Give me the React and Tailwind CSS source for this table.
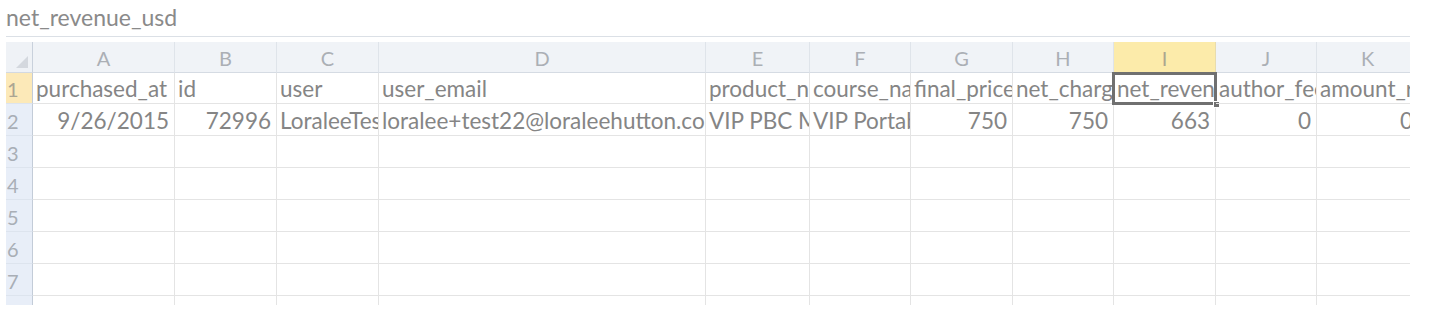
import React from "react";

const cols = ["A", "B", "C", "D", "E", "F", "G", "H", "I", "J", "K"];

const row1 = [
  "purchased_at",
  "id",
  "user",
  "user_email",
  "product_name",
  "course_name",
  "final_price",
  "net_charge",
  "net_revenue_usd",
  "author_fee",
  "amount_refunded",
];

const row2 = [
  { t: "9/26/2015", r: true },
  { t: "72996", r: true },
  { t: "LoraleeTest", r: false },
  { t: "loralee+test22@loraleehutton.com", r: false },
  { t: "VIP PBC Membership", r: false },
  { t: "VIP Portable Business", r: false },
  { t: "750", r: true },
  { t: "750", r: true },
  { t: "663", r: true },
  { t: "0", r: true },
  { t: "0", r: true },
];

const gridCols =
  "grid grid-cols-[27px_142px_102px_102px_327px_104px_101px_102px_101px_102px_101px_102px]";

function Cell({ children, right, className = "" }) {
  return (
    <div
      className={`border-r border-b border-[#e4e4e4] overflow-hidden whitespace-nowrap leading-none flex items-end pb-[3px] ${
        right ? "justify-end pr-[5px]" : "justify-start pl-[3px]"
      } ${className}`}
    >
      <span className="block">{children}</span>
    </div>
  );
}

function RowHeader({ n, h, active }) {
  return (
    <div
      className={`${h} border-r border-r-[#c3ccd8] border-b border-b-[#dde4ee] flex items-end pb-[4px] pl-[1px] text-[20px] leading-none ${
        active ? "bg-[#fce9b8] text-[#aba593]" : "bg-[#e8eef8] text-[#a9aeb6]"
      }`}
    >
      {n}
    </div>
  );
}

export default function App() {
  const emptyRows = [
    { n: 3, h: "h-[32px]" },
    { n: 4, h: "h-[32px]" },
    { n: 5, h: "h-[32px]" },
    { n: 6, h: "h-[32px]" },
    { n: 7, h: "h-[32px]" },
    { n: "", h: "h-[32px]" },
  ];
  return (
    <div
      className="w-[1431px] h-[323px] bg-white overflow-hidden"
      style={{ fontFamily: "Lato, 'Open Sans', sans-serif" }}
    >
      <div className="h-[36px] pl-[6px] flex items-center text-[23px] text-[#8a8a8a] leading-none">
        <span className="-mt-[2px]">net_revenue_usd</span>
      </div>
      <div className="ml-[6px] w-[1404px] h-px bg-[#dbe0e6]" />
      <div className="h-[5px]" />
      <div className="ml-[6px] w-[1404px] h-[263px] overflow-hidden">
        <div className={`${gridCols} w-[1418px]`}>
          {/* header row */}
          <div className="h-[31px] bg-[#eff2f6] border-r border-r-[#c9d1dc] border-b border-b-[#d3d9e1] flex items-end justify-end pr-[4px] pb-[4px]">
            <svg width="12" height="12" viewBox="0 0 12 12">
              <polygon points="12,0 12,12 0,12" fill="#d4d8de" />
            </svg>
          </div>
          {cols.map((c) => (
            <div
              key={c}
              className={`h-[31px] border-r border-b flex items-end pb-[4px] justify-center text-[20px] leading-none ${
                c === "I"
                  ? "bg-[#fcebaa] border-r-[#e8dcae] border-b-[#e4cd74] text-[#ada68f]"
                  : "bg-[#f0f3f7] border-r-[#dfe4ea] border-b-[#d5dbe3] text-[#abafb5]"
              }`}
            >
              {c}
            </div>
          ))}

          {/* row 1 */}
          <RowHeader n={1} h="h-[31px]" active />
          {row1.map((t, i) => (
            <div key={i} className="relative h-[31px]">
              <Cell className="h-[31px] text-[22.5px] text-[#858585]">{t}</Cell>
              {i === 8 && (
                <>
                  <div className="absolute -left-[2px] -top-[1px] -right-[1px] -bottom-[1px] border-[3px] border-[#707070] pointer-events-none" />
                  <div className="absolute -right-[4px] -bottom-[4px] w-[7px] h-[7px] bg-[#707070] border border-white pointer-events-none" />
                </>
              )}
            </div>
          ))}

          {/* row 2 */}
          <RowHeader n={2} h="h-[32px]" />
          {row2.map((c, i) => (
            <Cell key={i} right={c.r} className="h-[32px] text-[22.5px] text-[#858585]">
              {c.t}
            </Cell>
          ))}

          {emptyRows.map((r, ri) => (
            <React.Fragment key={ri}>
              <RowHeader n={r.n} h={r.h} />
              {cols.map((c) => (
                <Cell key={c} className={r.h}>
                  {""}
                </Cell>
              ))}
            </React.Fragment>
          ))}
        </div>
      </div>
    </div>
  );
}
